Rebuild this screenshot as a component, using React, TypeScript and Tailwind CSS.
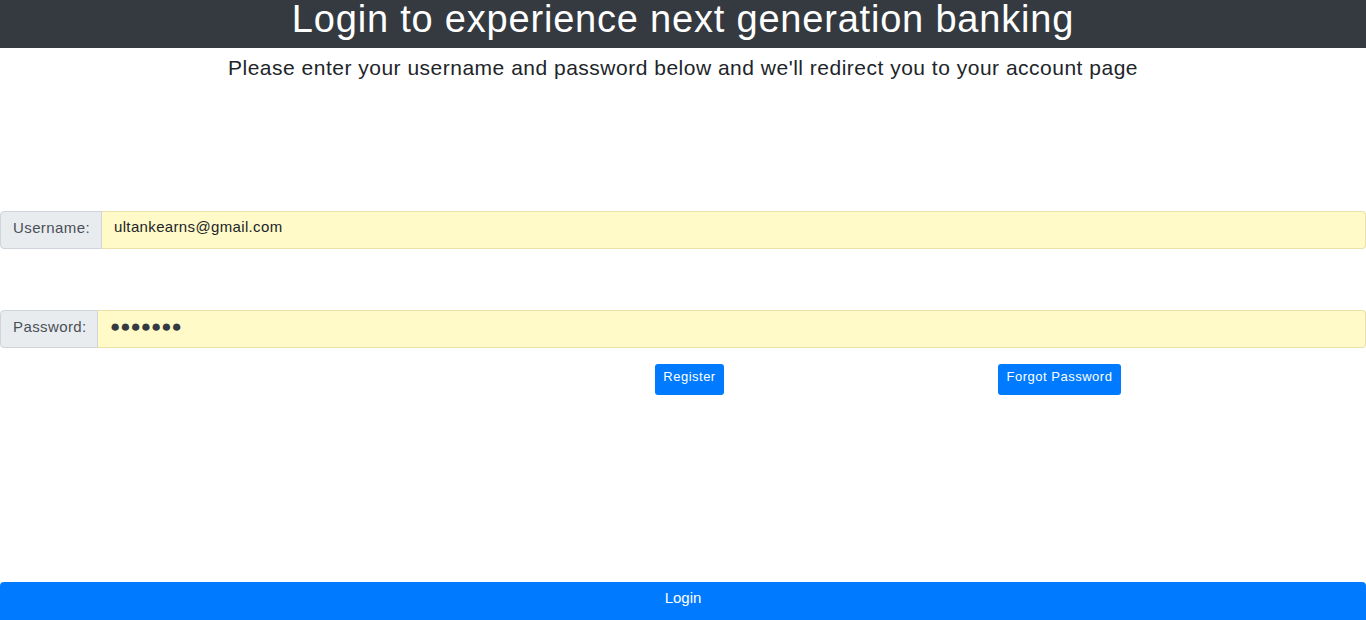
export default function App() {
  return (
    <main className="flex flex-col w-[1366px] h-[620px] bg-white font-['Liberation_Sans',Arial,sans-serif]">
      <header className="h-[48px] bg-[#343a40] flex items-center justify-center">
        <h1 className="text-[38px] leading-none text-white font-normal tracking-[0.8px] pb-[10px]">
          Login to experience next generation banking
        </h1>
      </header>
      <p className="text-[21px] leading-none text-[#212529] text-center tracking-[0.5px] mt-[9px]">
        Please enter your username and password below and we'll redirect you to your account page
      </p>

      <div className="mt-[133px] flex h-[38px] text-[15px] tracking-[0.4px]">
        <span className="flex items-center px-[12px] pb-[3px] w-[102px] bg-[#e9ecef] border border-[#ced4da] rounded-l-[4px] text-[#495057]">
          Username:
        </span>
        <div className="flex-1 flex items-center pl-[12px] pb-[5px] bg-[#fffac8] border border-l-0 border-[#ebe0a8] rounded-r-[4px] text-[#212529] tracking-[0.35px]">
          ultankearns@gmail.com
        </div>
      </div>

      <div className="mt-[61px] flex h-[38px] text-[15px] tracking-[0.4px]">
        <span className="flex items-center px-[12px] pb-[3px] w-[98px] bg-[#e9ecef] border border-[#ced4da] rounded-l-[4px] text-[#495057]">
          Password:
        </span>
        <div className="flex-1 flex items-center pl-[12px] pb-[4px] bg-[#fffac8] border border-l-0 border-[#ebe0a8] rounded-r-[4px] text-[#343a40] text-[17px] tracking-[0px]">
          ●●●●●●●
        </div>
      </div>

      <div className="mt-[16px] flex text-[13px] text-white tracking-[0.5px]">
        <button className="ml-[655px] h-[31px] w-[69px] bg-[#007bff] rounded-[3px] pb-[6px]">Register</button>
        <button className="ml-[274px] h-[31px] w-[123px] bg-[#007bff] rounded-[3px] pb-[6px]">Forgot Password</button>
      </div>

      <button className="mt-auto h-[38px] w-full bg-[#007bff] rounded-t-[4px] text-white text-[15px] pb-[6px]">
        Login
      </button>
    </main>
  );
}
